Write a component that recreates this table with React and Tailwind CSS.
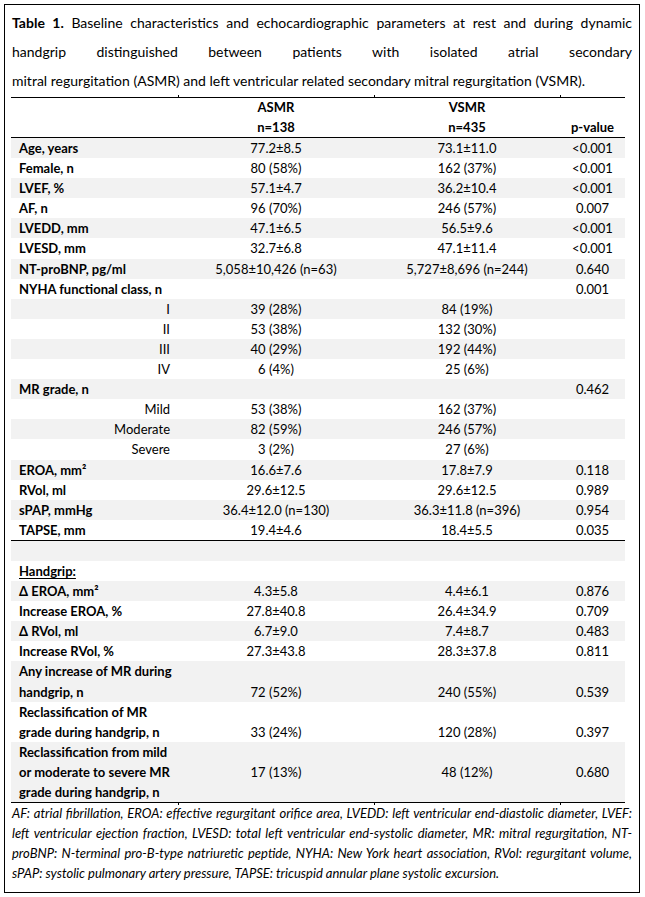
import React from "react";

const COLS = "grid grid-cols-[167px_196px_186px_65px]";

const top = [
  ["Age, years", "77.2±8.5", "73.1±11.0", "<0.001"],
  ["Female, n", "80 (58%)", "162 (37%)", "<0.001"],
  ["LVEF, %", "57.1±4.7", "36.2±10.4", "<0.001"],
  ["AF, n", "96 (70%)", "246 (57%)", "0.007"],
  ["LVEDD, mm", "47.1±6.5", "56.5±9.6", "<0.001"],
  ["LVESD, mm", "32.7±6.8", "47.1±11.4", "<0.001"],
  ["NT-proBNP, pg/ml", "5,058±10,426 (n=63)", "5,727±8,696 (n=244)", "0.640"],
  ["NYHA functional class, n", "", "", "0.001"],
  ["I", "39 (28%)", "84 (19%)", "", true],
  ["II", "53 (38%)", "132 (30%)", "", true],
  ["III", "40 (29%)", "192 (44%)", "", true],
  ["IV", "6 (4%)", "25 (6%)", "", true],
  ["MR grade, n", "", "", "0.462"],
  ["Mild", "53 (38%)", "162 (37%)", "", true],
  ["Moderate", "82 (59%)", "246 (57%)", "", true],
  ["Severe", "3 (2%)", "27 (6%)", "", true],
  ["EROA, mm²", "16.6±7.6", "17.8±7.9", "0.118"],
  ["RVol, ml", "29.6±12.5", "29.6±12.5", "0.989"],
  ["sPAP, mmHg", "36.4±12.0 (n=130)", "36.3±11.8 (n=396)", "0.954"],
  ["TAPSE, mm", "19.4±4.6", "18.4±5.5", "0.035"],
];

const grip = [
  [["Δ EROA, mm²"], "4.3±5.8", "4.4±6.1", "0.876"],
  [["Increase EROA, %"], "27.8±40.8", "26.4±34.9", "0.709"],
  [["Δ RVol, ml"], "6.7±9.0", "7.4±8.7", "0.483"],
  [["Increase RVol, %"], "27.3±43.8", "28.3±37.8", "0.811"],
  [["Any increase of MR during", "handgrip, n"], "72 (52%)", "240 (55%)", "0.539", "end"],
  [["Reclassification of MR", "grade during handgrip, n"], "33 (24%)", "120 (28%)", "0.397", "end"],
  [
    ["Reclassification from mild", "or moderate to severe MR", "grade during handgrip, n"],
    "17 (13%)",
    "48 (12%)",
    "0.680",
    "center",
  ],
];

function Row({ label, a, b, p, sub, gray, align = "center" }) {
  const v = align === "end" ? "flex justify-center items-end" : "flex justify-center items-center";
  return (
    <div className={`${COLS} ${gray ? "bg-[#f2f2f2]" : "bg-white"}`}>
      <div className={sub ? "pr-2 text-right whitespace-nowrap" : "pl-2 font-bold whitespace-nowrap"}>{label}</div>
      <div className={v}>{a}</div>
      <div className={v}>{b}</div>
      <div className={v}>{p}</div>
    </div>
  );
}

export default function App() {
  return (
    <div className="bg-white min-h-[897px] pt-1 font-['Lato',sans-serif] text-black">
      <div className="ml-1 w-[636px] h-[889px] border border-black px-[7px] pt-[3px]">
        {/* caption */}
        <div className="text-[14px] leading-[29px]">
          <div className="text-justify [text-align-last:justify]">
            <b>Table 1.</b> Baseline characteristics and echocardiographic parameters at rest and during dynamic
          </div>
          <div className="text-justify [text-align-last:justify]">
            handgrip distinguished between patients with isolated atrial secondary
          </div>
          <div>mitral regurgitation (ASMR) and left ventricular related secondary mitral regurgitation (VSMR).</div>
        </div>

        <div className="-ml-px w-[614px] text-[13px] leading-[20.1px]">
          {/* top rule with column ticks */}
          <div className={`${COLS} h-[3px]`}>
            <div className="border-b border-black" />
            <div className="border-b border-l border-black" />
            <div className="border-b border-l border-black" />
            <div className="border-b border-l border-black" />
          </div>
          <div className={`${COLS} font-bold leading-[19.5px]`}>
            <div />
            <div className="text-center">ASMR</div>
            <div className="text-center">VSMR</div>
            <div />
            <div />
            <div className="text-center">n=138</div>
            <div className="text-center">n=435</div>
            <div className="text-center">p-value</div>
          </div>
          <div className="h-px bg-black" />

          {top.map((r, i) => (
            <Row key={i} label={r[0]} a={r[1]} b={r[2]} p={r[3]} sub={r[4]} gray={i % 2 === 0} />
          ))}
          <div className="h-px bg-black" />

          <div className="h-[20.1px] bg-[#f2f2f2]" />
          <div className="pl-2 font-bold underline underline-offset-2">Handgrip:</div>
          {grip.map((r, i) => (
            <Row
              key={i}
              label={r[0].map((t, j) => (
                <div key={j}>{t}</div>
              ))}
              a={r[1]}
              b={r[2]}
              p={r[3]}
              align={r[4]}
              gray={i % 2 === 0}
            />
          ))}

          {/* bottom rule with column ticks */}
          <div className={`${COLS} h-[3px]`}>
            <div className="border-t border-black" />
            <div className="border-t border-l border-black" />
            <div className="border-t border-l border-black" />
            <div className="border-t border-l border-black" />
          </div>
        </div>

        {/* footnote */}
        <div className="-mt-[2px] text-[13px] leading-[20px] italic">
          <div className="text-justify [text-align-last:justify] whitespace-nowrap">
            AF: atrial fibrillation, EROA: effective regurgitant orifice area, LVEDD: left ventricular end-diastolic diameter, LVEF:
          </div>
          <div className="text-justify [text-align-last:justify] whitespace-nowrap">
            left ventricular ejection fraction, LVESD: total left ventricular end-systolic diameter, MR: mitral regurgitation, NT-
          </div>
          <div className="text-justify [text-align-last:justify] whitespace-nowrap">
            proBNP: N-terminal pro-B-type natriuretic peptide, NYHA: New York heart association, RVol: regurgitant volume,
          </div>
          <div className="whitespace-nowrap">sPAP: systolic pulmonary artery pressure, TAPSE: tricuspid annular plane systolic excursion.</div>
        </div>
      </div>
    </div>
  );
}
